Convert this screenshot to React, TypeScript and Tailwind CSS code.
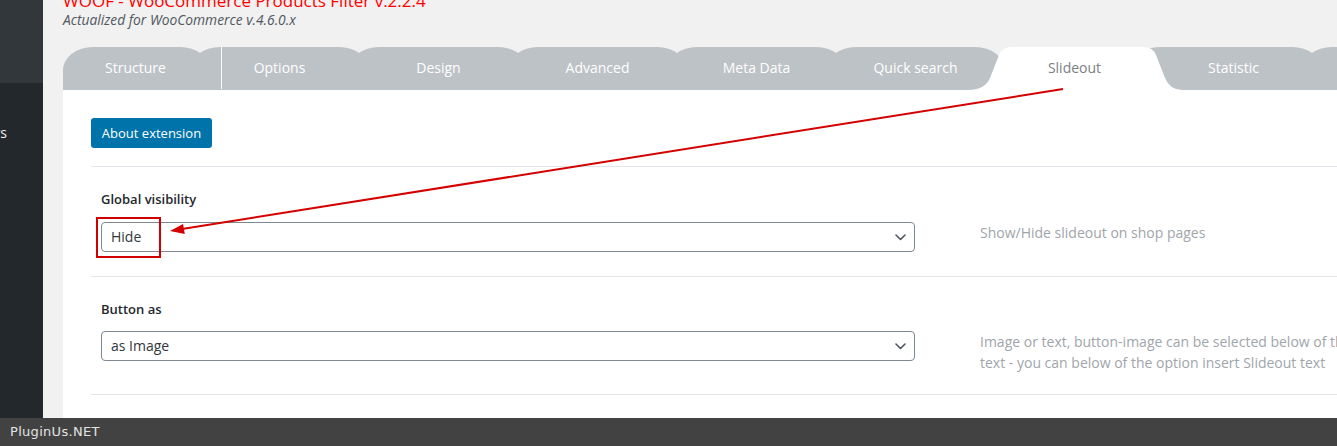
import React from "react";

const tabPath = (x0: number, x1: number) =>
  `M${x0},43 L${x0},23 A30,23 0 0 1 ${x0 + 30},0 L${x1 - 30},0 A30,23 0 0 1 ${x1},23 L${x1},43 Z`;

const grayTabs: [number, number][] = [
  [0, 147],
  [127, 306],
  [286, 465],
  [445, 624],
  [604, 783],
  [763, 942],
  [1067, 1259],
  [1239, 1330],
];

const tabs = [
  "Structure",
  "Options",
  "Design",
  "Advanced",
  "Meta Data",
  "Quick search",
  "Slideout",
  "Statistic",
];

function Chevron() {
  return (
    <svg width="11" height="7" viewBox="0 0 11 7" fill="none">
      <path d="M1 1 L5.5 5.5 L10 1" stroke="#50575e" strokeWidth="1.6" strokeLinecap="round" strokeLinejoin="round" />
    </svg>
  );
}

function Select({ value }: { value: string }) {
  return (
    <div className="flex h-[30px] w-[814px] shrink-0 items-center justify-between rounded-[4px] border border-[#7e8993] bg-white pl-[9px] pr-[8px] text-[14px] text-[#32373c]">
      <span className="-mt-[2px]">{value}</span>
      <Chevron />
    </div>
  );
}

export default function App() {
  return (
    <div className="relative flex h-[446px] w-[1337px] flex-col overflow-hidden bg-[#f1f1f1] font-['Open_Sans',sans-serif]">
      <div className="flex h-[418px]">
        {/* sidebar */}
        <div className="flex w-[43px] shrink-0 flex-col bg-[#23282d]">
          <div className="h-[83px] bg-[#32373c]" />
          <div className="mt-[40px] flex h-[20px] justify-end overflow-hidden whitespace-nowrap pr-[36px] text-[14px] leading-[20px] text-[#f0f0f1]">
            Filters
          </div>
        </div>

        {/* content */}
        <div className="flex min-w-0 flex-1 flex-col overflow-hidden pl-[20px]">
          <div className="-mt-[8px] h-[17px] whitespace-nowrap text-[17px] leading-[17px] text-[#ff0000]">
            WOOF - WooCommerce Products Filter v.2.2.4
          </div>
          <div className="mt-[2px] text-[13.8px] italic leading-[17px] text-[#50575e]">
            Actualized for WooCommerce v.4.6.0.x
          </div>

          {/* tabs */}
          <div className="relative mt-[19px] h-[43px] shrink-0">
            <svg className="absolute inset-0" width="1274" height="43" viewBox="0 0 1274 43">
              {grayTabs.map(([a, b], i) => (
                <path key={i} d={tabPath(a, b)} fill="#bdc2c7" />
              ))}
              <line x1="158.5" y1="0" x2="158.5" y2="42" stroke="#ffffff" strokeWidth="1" opacity="0.9" />
              <path
                d="M905,43 Q922,43 927,31 L936,8 Q939,0 949,0 L1080,0 Q1090,0 1093,8 L1102,31 Q1107,43 1119,43 Z"
                fill="#ffffff"
              />
            </svg>
            <div className="relative flex h-full whitespace-nowrap pb-[2px] text-[14px]">
              {tabs.map((t, i) => (
                <div
                  key={t}
                  className={
                    i === 0
                      ? "flex w-[137px] shrink-0 items-center justify-center pl-[8px] text-white"
                      : i === 6
                      ? "flex w-[159px] shrink-0 items-center justify-center text-[#7c8085]"
                      : "flex w-[159px] shrink-0 items-center justify-center text-white"
                  }
                >
                  {t}
                </div>
              ))}
            </div>
          </div>

          {/* panel */}
          <div className="flex-1 bg-white pl-[28px] pt-[28px]">
            <div className="flex h-[30px] w-[121px] items-center justify-center rounded-[3px] bg-[#0073aa] pt-[1px] text-[13px] text-white">
              About extension
            </div>

            <div className="mt-[18px] border-t border-[#e2e5e9] pb-[24px] pl-[10px] pt-[24px]">
              <div className="text-[13px] font-semibold leading-[17px] text-[#23282d]">Global visibility</div>
              <div className="mt-[14px] flex items-start">
                <Select value="Hide" />
                <div className="ml-[65px] shrink-0 whitespace-nowrap text-[14px] leading-[21px] text-[#a0a5aa]">
                  Show/Hide slideout on shop pages
                </div>
              </div>
            </div>

            <div className="border-b border-t border-[#e2e5e9] pb-[21px] pl-[10px] pt-[24px]">
              <div className="text-[13px] font-semibold leading-[17px] text-[#23282d]">Button as</div>
              <div className="mt-[13px] flex items-start">
                <Select value="as Image" />
                <div className="ml-[65px] shrink-0 whitespace-nowrap text-[14px] leading-[21px] text-[#a0a5aa]">
                  Image or text, button-image can be selected below of the option Slideout image
                  <br />
                  text - you can below of the option insert Slideout text
                </div>
              </div>
            </div>
          </div>
        </div>
      </div>

      {/* bottom bar */}
      <div className="flex h-[28px] shrink-0 items-center bg-[#424242] pl-[10px] font-['DejaVu_Sans',sans-serif] text-[13px] tracking-[0.3px] text-[#e4e4e4]">
        PluginUs.NET
      </div>

      {/* annotation overlay */}
      <div className="pointer-events-none absolute left-[96px] top-[217px] h-[41px] w-[65px] border-2 border-[#d10000]" />
      <svg className="pointer-events-none absolute inset-0" width="1337" height="446" viewBox="0 0 1337 446">
        <line x1="1063" y1="89" x2="182" y2="229" stroke="#d40000" strokeWidth="2" />
        <polygon points="170,231 184.8,234 183,224" fill="#d40000" />
      </svg>
    </div>
  );
}
